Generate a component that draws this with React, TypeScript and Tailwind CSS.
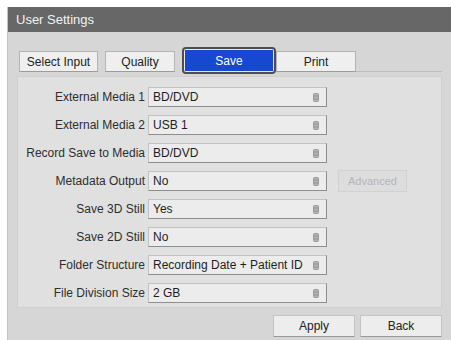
import React from 'react';

const rows = [
  { label: 'External Media 1', value: 'BD/DVD' },
  { label: 'External Media 2', value: 'USB 1' },
  { label: 'Record Save to Media', value: 'BD/DVD' },
  { label: 'Metadata Output', value: 'No', advanced: true },
  { label: 'Save 3D Still', value: 'Yes' },
  { label: 'Save 2D Still', value: 'No' },
  { label: 'Folder Structure', value: 'Recording Date + Patient ID' },
  { label: 'File Division Size', value: '2 GB' },
];

const SpinIcon = () => (
  <svg width="6" height="9" viewBox="0 0 6 9" className="shrink-0">
    <rect x="0.5" y="0.5" width="5" height="8" rx="1" fill="#b5b5b5" stroke="#9a9a9a" />
    <line x1="1" y1="3" x2="5" y2="3" stroke="#8a8a8a" strokeWidth="0.8" />
    <line x1="1" y1="6" x2="5" y2="6" stroke="#8a8a8a" strokeWidth="0.8" />
  </svg>
);

const Tab = ({ label, width }: { label: string; width: string }) => (
  <div className={`${width} h-[21px] mt-[2px] flex items-center justify-center bg-[#efefef] border border-[#b4b4b4] border-b-[#9c9c9c] text-[12px] text-[#222]`}>
    {label}
  </div>
);

export default function App() {
  return (
    <div className="w-[451px] h-[340px] bg-white pt-[7px] pl-[7px] overflow-hidden" style={{ fontFamily: '"Liberation Sans", Arial, sans-serif' }}>
      <div className="h-full flex flex-col bg-[#d6d6d6] border-l border-[#c4c4c4]">
        <div className="h-[25px] shrink-0 bg-[#676767] text-[#f2f2f2] text-[13px] pl-[8px] flex items-center">User Settings</div>

        <div className="pl-[9px] pr-[9px] pt-[17px]">
          {/* tabs */}
          <div className="flex items-start h-[27px] pl-[2px]">
            <Tab label="Select Input" width="w-[79px]" />
            <div className="w-[7px]" />
            <Tab label="Quality" width="w-[70px]" />
            <div className="w-[7px]" />
            <div className="w-[94px] h-[27px] -mt-[2px] border-2 border-[#4e4e4e] rounded-[4px] p-[1px] bg-[#e8e8e8]">
              <div className="h-full bg-[#1549d2] flex items-center justify-center text-[12px] text-white">Save</div>
            </div>
            <Tab label="Print" width="w-[80px]" />
            <div className="flex-1 h-[23px] border-b border-[#bdbdbd]" />
          </div>

          {/* panel */}
          <div className="bg-[#e0e0e0] border border-[#cfcfcf] pt-[10px] pb-[4px] flex flex-col gap-[8px]">
            {rows.map((r) => (
              <div key={r.label} className="flex items-center h-[20px]">
                <div className="w-[130px] pr-[3px] text-right text-[12px] text-[#2e2e2e] whitespace-nowrap">{r.label}</div>
                <div className="w-[179px] h-[20px] bg-[#ececec] border border-[#c2c2c2] border-r-[#8e8e8e] border-b-[#8e8e8e] flex items-center justify-between pl-[4px] pr-[7px] text-[12px] text-[#1e1e1e]">
                  <span>{r.value}</span>
                  <SpinIcon />
                </div>
                {r.advanced && (
                  <div className="ml-[11px] w-[69px] h-[22px] flex items-center justify-center bg-[#dddddd] border border-[#d2d2d2] text-[11px] text-[#b4b4b4]">Advanced</div>
                )}
              </div>
            ))}
          </div>
        </div>

        {/* buttons */}
        <div className="flex justify-end gap-[5px] pr-[9px] mt-[7px]">
          <div className="w-[82px] h-[22px] flex items-center justify-center bg-[#ededed] border border-[#c3c3c3] border-b-[#9a9a9a] text-[12px] text-[#222]">Apply</div>
          <div className="w-[82px] h-[22px] flex items-center justify-center bg-[#ededed] border border-[#c3c3c3] border-b-[#9a9a9a] text-[12px] text-[#222]">Back</div>
        </div>
      </div>
    </div>
  );
}
